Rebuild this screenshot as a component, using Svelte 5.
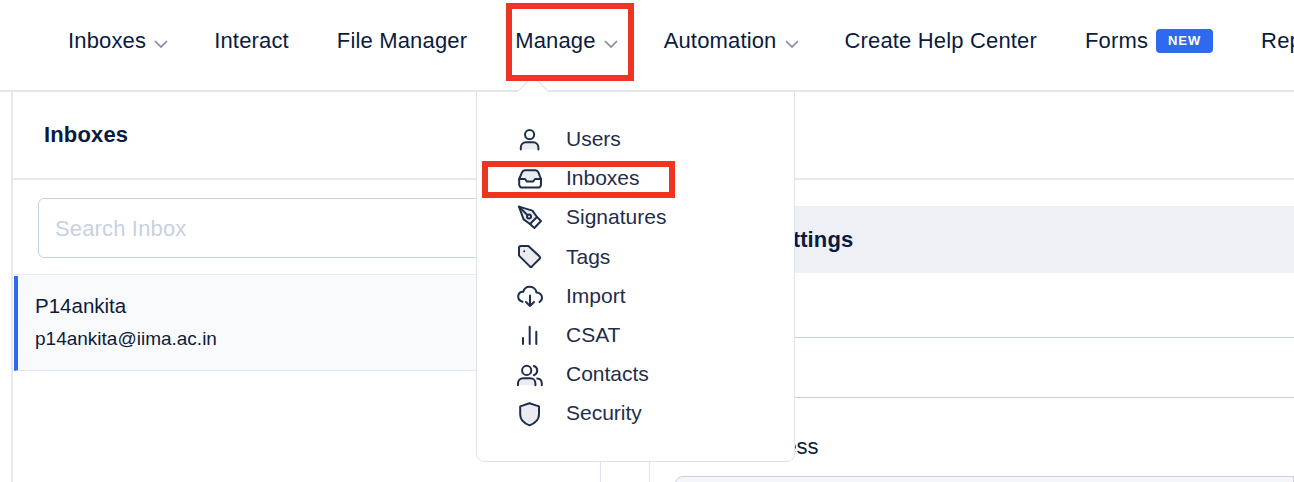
<script lang="ts">
  const navItems = [
    { label: "Inboxes", caret: true },
    { label: "Interact" },
    { label: "File Manager" },
    { label: "Manage", caret: true },
    { label: "Automation", caret: true },
    { label: "Create Help Center" },
    { label: "Forms", badge: "NEW" },
    { label: "Reports" }
  ];
  const menu = ["Users", "Inboxes", "Signatures", "Tags", "Import", "CSAT", "Contacts", "Security"];
</script>

<div class="page">
  <nav class="topnav">
    {#each navItems as item}
      <div class="nav-item">
        <span>{item.label}</span>
        {#if item.caret}
          <svg class="caret" width="14" height="8" viewBox="0 0 14 8"><path d="M1 1l6 6 6-6" /></svg>
        {/if}
        {#if item.badge}
          <span class="badge">{item.badge}</span>
        {/if}
      </div>
    {/each}
  </nav>

  <div class="workspace">
    <div class="head"><h2>Inboxes</h2></div>
    <div class="cols">
      <section class="list-col">
        <div class="search-wrap">
          <input class="search" placeholder="Search Inbox" />
        </div>
        <div class="inbox-row">
          <div class="inbox-name">P14ankita</div>
          <div class="inbox-mail">p14ankita@iima.ac.in</div>
        </div>
      </section>
      <div class="spacer-col"></div>
      <section class="detail-col">
        <div class="settings-head">Inboxes Settings</div>
        <div class="field-row"></div>
        <div class="field-row short"></div>
        <div class="field-label">Email Address</div>
        <div class="field-box"></div>
      </section>
    </div>
  </div>

  <div class="dropdown">
    <div class="dropdown-arrow"></div>
    {#each menu as name}
      <div class="menu-row">
        <svg class="menu-icon" width="26" height="26" viewBox="0 0 26 26">
          {#if name === "Users"}
            <circle cx="12.6" cy="8.6" r="4.6" />
            <path class="soft" d="M3.8 23.5v-2a5 5 0 0 1 5-5.2h7.6a5 5 0 0 1 5 5.2v2" />
          {:else if name === "Inboxes"}
            <path class="soft" d="M2.2 14L5 7.3a3.4 3.4 0 0 1 3-2.1h10.4a3.4 3.4 0 0 1 3 2.1L24 14h-6l-2 2.6h-6L8 14z" />
            <path d="M2.2 14v5.6a3 3 0 0 0 3 3h15.8a3 3 0 0 0 3-3V14" />
          {:else if name === "Signatures"}
            <path class="soft" d="M2 2.6l13.4 4 4.6 6.4-7 7-6.4-4.6z" />
            <path d="M20 13l4 4-6.6 7-4.4-4M2 2.6l8.6 8.6" />
            <circle cx="12" cy="12.4" r="2" />
          {:else if name === "Tags"}
            <path class="soft" d="M2 4a2 2 0 0 1 2-2h7.4l11.2 10.6a1.6 1.6 0 0 1 0 2.2l-7.6 7.6a1.6 1.6 0 0 1-2.2 0L2 11.6z" />
            <circle class="dot" cx="7.2" cy="7.2" r="1" />
          {:else if name === "Import"}
            <path d="M5.6 18.8C2.6 18 1 15.6 1.2 13c.3-3 2.7-4.5 4.9-4.2C7.2 5.6 10 3.6 13 3.8c3.4.2 6 2.7 6.5 5.7 3-.1 5.5 2.4 5.5 5 0 2-1 3.5-2.5 4.4" />
            <path d="M13 12.4v10.6M9 19l4 4 4-4" />
          {:else if name === "CSAT"}
            <path d="M6 16v6M12.7 4.7V22M19.3 9.7V22" />
          {:else if name === "Contacts"}
            <circle cx="9.7" cy="9.4" r="4.6" />
            <path class="soft" d="M1 24.2v-2a5 5 0 0 1 5-5h7.4a5 5 0 0 1 5 5v2" />
            <path d="M16.8 5a4.8 4.8 0 0 1 0 9.2M20.2 17.6a5 5 0 0 1 4.6 4.6v2" />
          {:else}
            <path class="soft" d="M12.5 3.2L22 6.4v8.2c0 4.8-4 8.8-9.5 10.8C7 23.4 3.2 19.4 3.2 14.6V6.4z" />
          {/if}
        </svg>
        <span>{name}</span>
      </div>
    {/each}
  </div>

  <!-- red annotation boxes from the screenshot -->
  <div class="mark mark-nav"></div>
  <div class="mark mark-menu"></div>
</div>

<style>
  :global(body) {
    margin: 0;
    background: #fff;
  }

  .page {
    position: relative;
    width: 1294px;
    height: 482px;
    overflow: hidden;
    font-family: "Liberation Sans", Arial, sans-serif;
    color: #0b1b3d;
  }

  .topnav {
    display: flex;
    align-items: center;
    gap: 48px;
    height: 81px;
    padding: 0 0 9px 68px;
    border-bottom: 2px solid #e4e6ed;
    white-space: nowrap;
    font-size: 22px;
    letter-spacing: 0.16px;
  }

  .nav-item {
    display: flex;
    align-items: center;
    gap: 8px;
    flex: none;
  }

  .caret {
    margin: 6px -2px 0 0;
  }

  .caret path {
    fill: none;
    stroke: #818a9e;
    stroke-width: 1.7;
  }

  .badge {
    background: #2f69f0;
    color: #fff;
    font-size: 13px;
    font-weight: 700;
    letter-spacing: 1px;
    width: 57px;
    height: 24px;
    line-height: 23px;
    text-align: center;
    border-radius: 4px;
  }

  .workspace {
    margin-left: 11px;
    border-left: 2px solid #e6e8f0;
    height: 390px;
  }

  .head {
    height: 86px;
    padding-left: 31px;
    display: flex;
    align-items: center;
    border-bottom: 2px solid #e6e8f0;
  }

  .head h2 {
    margin: 0;
    font-size: 22px;
    font-weight: 700;
    letter-spacing: 0.15px;
  }

  .cols {
    display: flex;
    height: 302px;
  }

  .list-col {
    width: 588px;
    flex: none;
    border-right: 1px solid #e2e5ed;
    box-sizing: border-box;
  }

  .search-wrap {
    padding: 18px 0 16px 25px;
    border-bottom: 1px solid #e6e8f0;
  }

  .search {
    display: block;
    width: 540px;
    height: 60px;
    box-sizing: border-box;
    border: 1px solid #c5d0e0;
    border-radius: 6px;
    padding: 2px 16px 0;
    font: 22px "Liberation Sans", Arial, sans-serif;
    letter-spacing: 0.15px;
    outline: none;
  }

  .search::placeholder {
    color: #c7d1df;
    opacity: 1;
  }

  .inbox-row {
    margin: 1px 0 0 1px;
    height: 95px;
    box-sizing: border-box;
    background: #f9fafc;
    border-left: 4px solid #2f69f0;
    border-bottom: 1px solid #e2e5ed;
    padding: 17px 0 0 17px;
  }

  .inbox-name {
    font-size: 20.5px;
    line-height: 26px;
  }

  .inbox-mail {
    font-size: 19px;
    line-height: 26px;
    margin-top: 7px;
  }

  .spacer-col {
    width: 48px;
    flex: none;
    border-right: 1px solid #e2e5ed;
  }

  .detail-col {
    flex: 1;
    padding-top: 26px;
  }

  .settings-head {
    height: 67px;
    line-height: 67px;
    background: #eef0f5;
    padding-left: 25px;
    font-size: 22px;
    font-weight: 700;
    letter-spacing: 0.15px;
  }

  .field-row {
    height: 64px;
    border-bottom: 1px solid #c8d1de;
  }

  .field-row.short {
    height: 59px;
  }

  .field-label {
    margin: 37px 0 0 28px;
    font-size: 22px;
    line-height: 24px;
  }

  .field-box {
    margin: 17px 0 0 25px;
    height: 40px;
    background: #f4f6fa;
    border: 1px solid #c8d1de;
    border-radius: 8px 0 0 0;
  }

  .dropdown {
    position: absolute;
    left: 476px;
    top: 91px;
    width: 319px;
    height: 371px;
    box-sizing: border-box;
    background: #fff;
    border: 1px solid #dfe3ec;
    border-radius: 0 0 8px 8px;
    padding-top: 27.4px;
    color: #1f2d4d;
    font-size: 21px;
  }

  .dropdown-arrow {
    position: absolute;
    left: 45px;
    top: -12px;
    width: 22px;
    height: 22px;
    box-sizing: border-box;
    background: #fff;
    border: 1px solid #dfe3ec;
    border-width: 1px 0 0 1px;
    transform: rotate(45deg);
  }

  .menu-row {
    position: relative;
    display: flex;
    align-items: center;
    height: 39.2px;
    padding-left: 40px;
    gap: 23px;
  }

  .menu-icon {
    flex: none;
    overflow: visible;
  }

  .menu-icon :global(*) {
    fill: none;
    stroke: #1f2d4d;
    stroke-width: 2;
    stroke-linejoin: round;
    stroke-linecap: round;
  }

  .menu-icon .soft {
    fill: #eaecef;
  }

  .menu-icon .dot {
    fill: #1f2d4d;
    stroke: none;
  }

  .mark {
    position: absolute;
    box-sizing: border-box;
    border: 6px solid #ee3524;
  }

  .mark-nav {
    left: 506px;
    top: 3px;
    width: 128px;
    height: 78px;
  }

  .mark-menu {
    left: 482px;
    top: 161px;
    width: 193px;
    height: 37px;
  }
</style>
